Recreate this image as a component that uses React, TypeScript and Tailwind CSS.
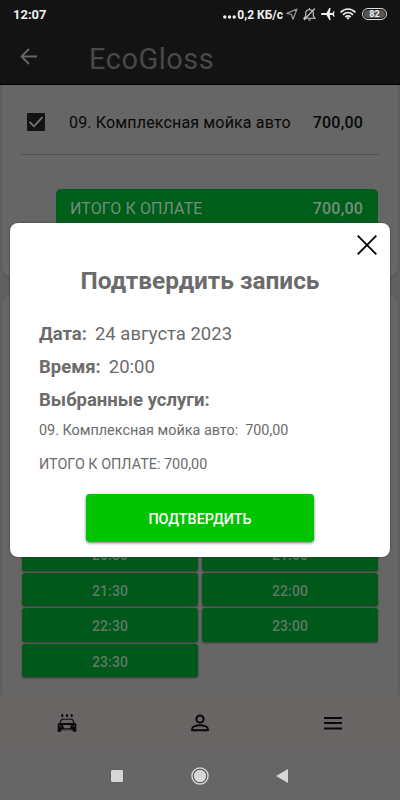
import React from 'react';

const rows = [
  ['20:30', '21:00'],
  ['21:30', '22:00'],
  ['22:30', '23:00'],
  ['23:30'],
];

const StatusBar: React.FC = () => (
  <div className="h-7 shrink-0 flex items-center justify-between pl-[13px] pr-[13px] text-[#efefef]">
    <span className="text-[13px] leading-7 font-bold pt-px">12:07</span>
    <div className="flex items-center">
      <svg className="w-[13px] h-7 mr-px" viewBox="0 0 13 28" fill="currentColor">
        <circle cx="1.800" cy="17" r="1.700" />
        <circle cx="6.500" cy="17" r="1.700" />
        <circle cx="11.200" cy="17" r="1.700" />
      </svg>
      <span className="text-[12px] leading-7 font-bold whitespace-nowrap pt-px">0,2 КБ/с</span>
      <svg className="w-3 h-3 ml-[3px]" viewBox="0 0 12 12" fill="none" stroke="#999" strokeWidth="1.2" strokeLinejoin="round">
        <path d="M11 1 0.8 5.4l4.7 1.1L7 11.2z" />
      </svg>
      <svg className="w-[13px] h-[13px] ml-[5px]" viewBox="0 0 13 13" fill="none" stroke="#ccc" strokeWidth="1.1">
        <path d="M1 10.2h11L10.3 8V5.2C10.3 3 8.8 1.7 6.5 1.7S2.7 3 2.7 5.2V8zM5.2 12h2.6M6.500 0v1.600M11.800.5 1 12" />
      </svg>
      <svg className="w-[14px] h-[14px] ml-[5px]" viewBox="0 0 14 14" fill="currentColor">
        <path d="M0 7c0-.7.6-1 1.300-1H5.500L8.300 1h1.300L8.800 6h2.700l1.100-1.800h1L13 7l.6 2.800h-1L11.500 8H8.800l.8 5H8.300L5.500 8H1.300C.6 8 0 7.700 0 7z" />
      </svg>
      <svg className="w-4 h-3 ml-[5px]" viewBox="0 0 16 12" fill="none" stroke="currentColor" strokeWidth="1.7">
        <path d="M.6 4.300C5-.1 11-.1 15.400 4.300M3 6.800c3-2.800 7-2.800 10 0M5.300 9c1.700-1.400 3.700-1.400 5.400 0" />
        <path d="M6.300 9.800 8 11.700l1.700-1.900C8.800 8.900 7.200 8.900 6.300 9.800z" fill="currentColor" stroke="none" />
      </svg>
      <div className="ml-[6px] w-[25px] h-3 rounded-full border border-[#ddd] p-px">
        <div className="h-full rounded-full bg-[#555] text-center text-[9px] leading-[8px] font-bold">82</div>
      </div>
    </div>
  </div>
);

const Header: React.FC = () => (
  <div className="h-[57px] shrink-0 flex items-center border-b border-black pl-[20px]">
    <svg className="w-[17px] h-[17px]" viewBox="0 0 17 17" fill="none" stroke="#666" strokeWidth="1.9">
      <path d="M17 8.500H2M9 1 1.500 8.500 9 16" />
    </svg>
    <h1 className="ml-[52px] text-[29px] leading-[34px] tracking-[0.5px] text-[#484848] pt-[5px]">EcoGloss</h1>
  </div>
);

const ServicesCard: React.FC = () => (
  <div className="h-[192px] shrink-0 mx-[2px] rounded-b-[9px] bg-[#666] px-[19px] shadow-[0_1px_2px_#505050]">
    <div className="h-[70px] flex items-center border-b border-[#505050] pl-[6px] pr-[16px] pt-[4px] text-[#080808]">
      <svg className="w-[18px] h-[18px]" viewBox="0 0 18 18">
        <rect width="18" height="18" rx="1" fill="#131313" />
        <path d="m2.500 8.800 4.500 4.500L15.500 4.200" fill="none" stroke="#777" strokeWidth="1.800" />
      </svg>
      <span className="ml-[24px] pt-[3px] text-[16px] tracking-[0.16px] whitespace-nowrap">09. Комплексная мойка авто</span>
      <span className="ml-auto pt-[3px] text-[16px] font-medium tracking-[0.2px]">700,00</span>
    </div>
    <div className="ml-[35px] mr-px mt-[34px] h-[38px] rounded-[5px] bg-[#005e1b] flex items-center justify-between pl-[14px] pr-[15px] pt-px text-[16px] text-[#728f78]">
      <span className="tracking-[0.1px]">ИТОГО К ОПЛАТЕ</span>
      <span className="font-medium tracking-[0.2px]">700,00</span>
    </div>
  </div>
);

const TimesCard: React.FC = () => (
  <div className="mt-[17px] flex-1 mx-[2px] rounded-t-[9px] bg-[#666] flex flex-col justify-end px-[20px] pb-[18px] shadow-[0_0_2px_#505050]">
    <div className="grid grid-cols-2 gap-x-[4px] gap-y-[2px]">
      {rows.flat().map((time) => (
        <div
          key={time}
          className="h-[33.5px] rounded-[3px] bg-[#00581b] shadow-[0_1px_2px_#3a3a3a] flex items-center justify-center text-[14px] font-medium text-[#5d7b62] tracking-[0.1px] pt-[4px]"
        >
          {time}
        </div>
      ))}
    </div>
  </div>
);

const BottomNav: React.FC = () => (
  <div className="h-14 shrink-0 bg-[#696565] grid grid-cols-3 items-center justify-items-center text-[#080808]">
    <svg className="w-5 h-5" viewBox="0 0 20 20" fill="currentColor">
      <path d="M4.700 1h1.200l.6 2.200-1.200 1-1.200-1zM9.400 1h1.200l.6 2.200-1.200 1-1.200-1zM14.100 1h1.200l.6 2.200-1.200 1-1.200-1z" />
      <path
        fillRule="evenodd"
        d="M4.500 5.700h11l2.300 4.300 1.500 1v7.700h-3.300V17.300H4v1.400H.7V11l1.500-1zM5.200 6.700 3.500 10h13l-1.700-3.300zM2.200 12v1.300l3 .9zM17.800 12v1.300l-3 .9zM6 12l1 3.200h6l1-3.200zM5 16v.6h10V16z"
      />
    </svg>
    <svg className="w-[24px] h-[24px]" viewBox="0 0 24 24" fill="none" stroke="currentColor" strokeWidth="2">
      <circle cx="12" cy="8" r="3.600" />
      <path d="M4.200 19.300v-1.500c0-2.300 4.300-3.600 7.800-3.600s7.800 1.300 7.800 3.600v1.500z" />
    </svg>
    <svg className="w-[18px] h-[14px]" viewBox="0 0 18 14" fill="currentColor">
      <path d="M0 1h18v2H0zM0 6h18v2H0zM0 11.500h18v2H0z" />
    </svg>
  </div>
);

const SystemNav: React.FC = () => (
  <div className="h-[49px] shrink-0 bg-[#666] flex items-center pl-[111px] text-[#d6d6d6]">
    <div className="w-3 h-3 rounded-[1px] bg-current shadow-[0_0_1px_#333]" />
    <svg className="w-[18px] h-[18px] ml-[68px]" viewBox="0 0 18 18">
      <circle cx="9" cy="9" r="6.300" fill="currentColor" />
      <circle cx="9" cy="9" r="8" fill="none" stroke="currentColor" strokeWidth="1.500" />
      <circle cx="9" cy="9" r="6.800" fill="none" stroke="#555" strokeWidth=".9" />
    </svg>
    <svg className="w-3 h-[14px] ml-[67px]" viewBox="0 0 12 14" fill="currentColor">
      <path d="M12 0v14L0 7z" />
    </svg>
  </div>
);

const ConfirmDialog: React.FC = () => (
  <div className="absolute left-[10px] top-[223px] w-[380px] h-[334px] rounded-[8px] bg-white text-[#6b6b6b] flex flex-col shadow-[0_0_2px_#333]">
    <button className="self-end mt-[12px] mr-[13px]">
      <svg className="w-5 h-5 block" viewBox="0 0 20 20" fill="none" stroke="#080808" strokeWidth="1.900">
        <path d="m.7.7 18.600 18.600M19.300.7.700 19.300" />
      </svg>
    </button>
    <h2 className="mt-[10px] h-[32px] leading-[32px] text-center text-[24.4px] font-bold whitespace-nowrap">Подтвердить запись</h2>
    <div className="mt-[21px] ml-[29px] flex flex-col text-[18.5px] leading-[33px] whitespace-nowrap">
      <div className="flex gap-[8px]">
        <b>Дата:</b>
        <span>24 августа 2023</span>
      </div>
      <div className="flex gap-[8px]">
        <b>Время:</b>
        <span>20:00</span>
      </div>
      <b>Выбранные услуги:</b>
    </div>
    <div className="ml-[29px] flex gap-[7px] text-[14.4px] leading-[28px] whitespace-nowrap">
      <span>09. Комплексная мойка авто:</span>
      <span>700,00</span>
    </div>
    <div className="ml-[29px] mt-[6px] text-[14.4px] leading-[28px] whitespace-nowrap">ИТОГО К ОПЛАТЕ: 700,00</div>
    <button className="mt-[15px] mx-auto w-[228px] h-[48px] shrink-0 rounded-[4px] bg-[#00c400] text-white text-[14.4px] font-medium pt-[3px] shadow-[0_1px_3px_#777]">
      ПОДТВЕРДИТЬ
    </button>
  </div>
);

export default function App() {
  return (
    <div className="relative w-[400px] h-[800px] overflow-hidden flex flex-col bg-[#131313] font-['Roboto',sans-serif]">
      <StatusBar />
      <Header />
      <div className="h-[610px] shrink-0 flex flex-col bg-[#606060]">
        <ServicesCard />
        <TimesCard />
      </div>
      <BottomNav />
      <SystemNav />
      <ConfirmDialog />
    </div>
  );
}
